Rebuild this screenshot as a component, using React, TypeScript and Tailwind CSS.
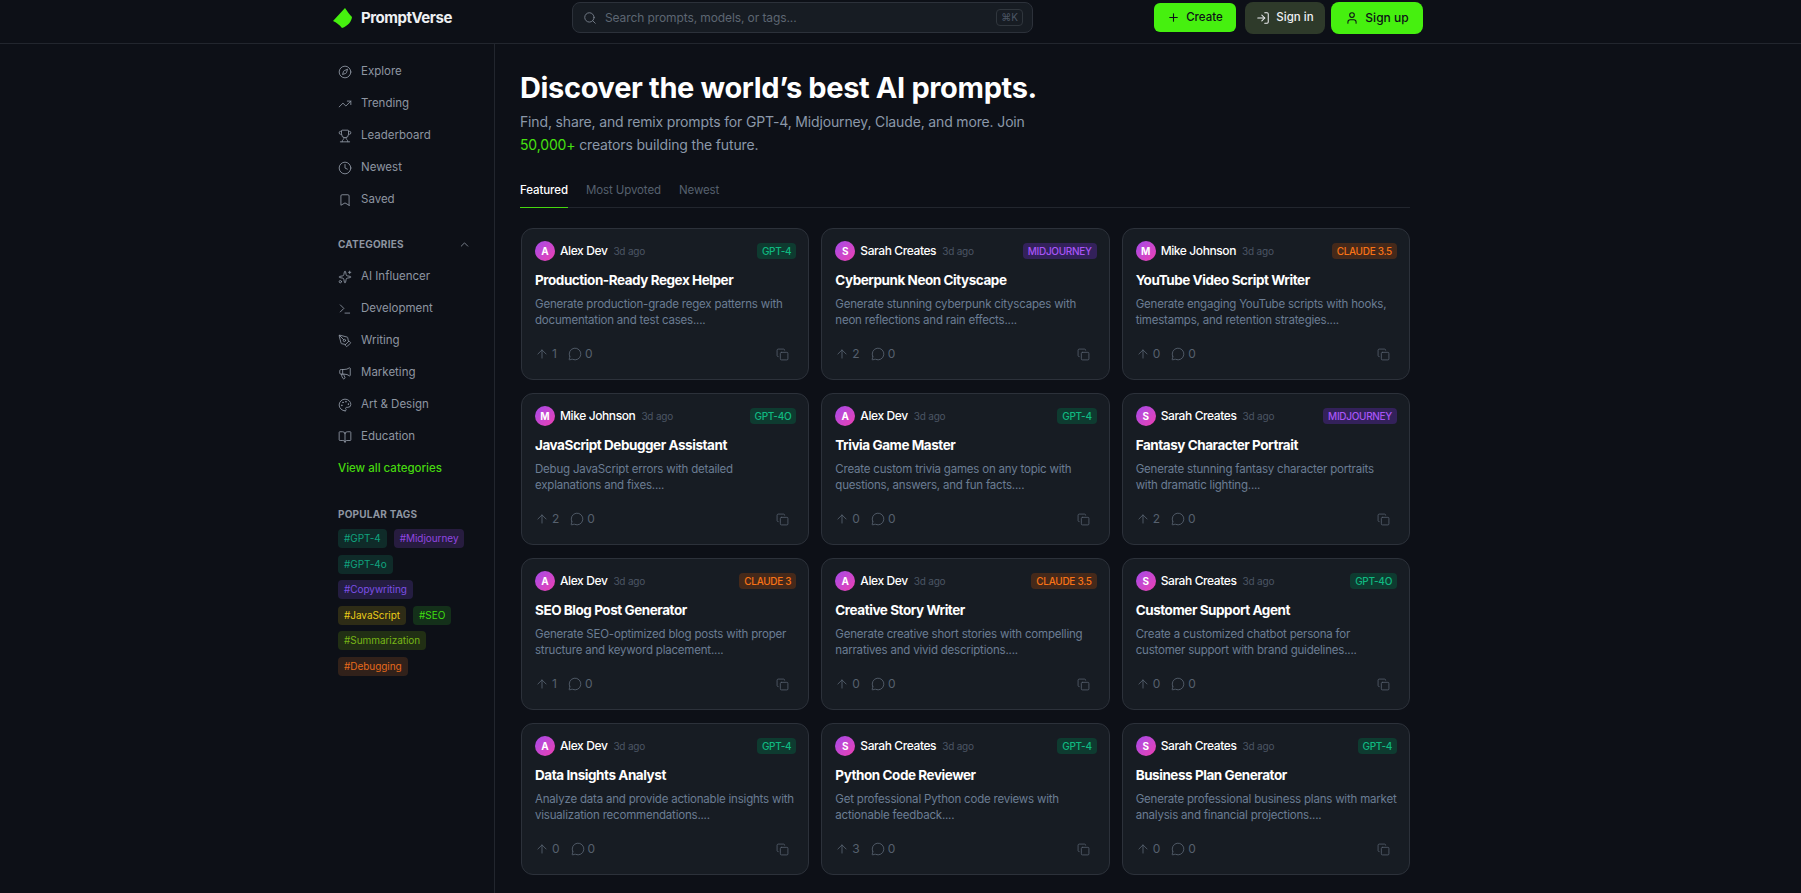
import React from 'react';
import {
  ArrowUp, BookOpen, Bookmark, ChevronUp, Clock, Compass, Copy, LogIn, Megaphone,
  MessageCircle, Palette, PenTool, Plus, Search, Sparkles, Terminal, TrendingUp, Trophy, User,
} from 'lucide-react';

const mainNav = [
  { label: 'Explore', icon: Compass },
  { label: 'Trending', icon: TrendingUp },
  { label: 'Leaderboard', icon: Trophy },
  { label: 'Newest', icon: Clock },
  { label: 'Saved', icon: Bookmark },
];

const categories = [
  { label: 'AI Influencer', icon: Sparkles },
  { label: 'Development', icon: Terminal },
  { label: 'Writing', icon: PenTool },
  { label: 'Marketing', icon: Megaphone },
  { label: 'Art & Design', icon: Palette },
  { label: 'Education', icon: BookOpen },
];

const tagRows = [
  [
    { label: '#GPT-4', cls: 'bg-[#0f2b29] text-[#10a37f]' },
    { label: '#Midjourney', cls: 'bg-[#271c3f] text-[#9146e0]' },
  ],
  [{ label: '#GPT-4o', cls: 'bg-[#0f2b29] text-[#10a37f]' }],
  [{ label: '#Copywriting', cls: 'bg-[#241d41] text-[#7c4fe6]' }],
  [
    { label: '#JavaScript', cls: 'bg-[#2e2c16] text-[#eacb18]' },
    { label: '#SEO', cls: 'bg-[#14301a] text-[#3fdc10]' },
  ],
  [{ label: '#Summarization', cls: 'bg-[#212f14] text-[#77b516]' }],
  [{ label: '#Debugging', cls: 'bg-[#31211a] text-[#e5691c]' }],
];

const badges: Record<string, string> = {
  'GPT-4': 'bg-[#0e3b30] text-[#10b981]',
  'GPT-4O': 'bg-[#0e3b30] text-[#10b981]',
  MIDJOURNEY: 'bg-[#33215a] text-[#a855f7]',
  'CLAUDE 3.5': 'bg-[#45291a] text-[#f97316]',
  'CLAUDE 3': 'bg-[#45291a] text-[#f97316]',
};

const prompts = [
  { author: 'Alex Dev', initial: 'A', model: 'GPT-4', title: 'Production-Ready Regex Helper', desc: 'Generate production-grade regex patterns with documentation and test cases....', up: 1 },
  { author: 'Sarah Creates', initial: 'S', model: 'MIDJOURNEY', title: 'Cyberpunk Neon Cityscape', desc: 'Generate stunning cyberpunk cityscapes with neon reflections and rain effects....', up: 2 },
  { author: 'Mike Johnson', initial: 'M', model: 'CLAUDE 3.5', title: 'YouTube Video Script Writer', desc: 'Generate engaging YouTube scripts with hooks, timestamps, and retention strategies....', up: 0 },
  { author: 'Mike Johnson', initial: 'M', model: 'GPT-4O', title: 'JavaScript Debugger Assistant', desc: 'Debug JavaScript errors with detailed explanations and fixes....', up: 2 },
  { author: 'Alex Dev', initial: 'A', model: 'GPT-4', title: 'Trivia Game Master', desc: 'Create custom trivia games on any topic with questions, answers, and fun facts....', up: 0 },
  { author: 'Sarah Creates', initial: 'S', model: 'MIDJOURNEY', title: 'Fantasy Character Portrait', desc: 'Generate stunning fantasy character portraits with dramatic lighting....', up: 2 },
  { author: 'Alex Dev', initial: 'A', model: 'CLAUDE 3', title: 'SEO Blog Post Generator', desc: 'Generate SEO-optimized blog posts with proper structure and keyword placement....', up: 1 },
  { author: 'Alex Dev', initial: 'A', model: 'CLAUDE 3.5', title: 'Creative Story Writer', desc: 'Generate creative short stories with compelling narratives and vivid descriptions....', up: 0 },
  { author: 'Sarah Creates', initial: 'S', model: 'GPT-4O', title: 'Customer Support Agent', desc: 'Create a customized chatbot persona for customer support with brand guidelines....', up: 0 },
  { author: 'Alex Dev', initial: 'A', model: 'GPT-4', title: 'Data Insights Analyst', desc: 'Analyze data and provide actionable insights with visualization recommendations....', up: 0 },
  { author: 'Sarah Creates', initial: 'S', model: 'GPT-4', title: 'Python Code Reviewer', desc: 'Get professional Python code reviews with actionable feedback....', up: 3 },
  { author: 'Sarah Creates', initial: 'S', model: 'GPT-4', title: 'Business Plan Generator', desc: 'Generate professional business plans with market analysis and financial projections....', up: 0 },
];

function PromptCard({ p }: { p: (typeof prompts)[number] }) {
  return (
    <div className="flex h-[152px] flex-col rounded-xl border border-[#2c313a] bg-[#171c23] pt-[12px] pr-[12px] pl-[13px]">
      <div className="flex h-[20px] items-center">
        <div className="flex h-[20px] w-[20px] items-center justify-center rounded-full bg-gradient-to-br from-[#a445ea] to-[#ee3bb0] text-[10px] font-bold text-white">
          {p.initial}
        </div>
        <span className="ml-[5px] text-[12px] font-medium tracking-[-0.4px] text-white">{p.author}</span>
        <span className="ml-[6px] text-[10px] tracking-[-0.2px] text-[#4b5563]">3d ago</span>
        <span className={`ml-auto flex h-[16px] items-center rounded px-[5px] text-[10px] font-medium tracking-[-0.3px] ${badges[p.model]}`}>
          {p.model}
        </span>
      </div>
      <h3 className="mt-[9px] text-[13.5px] leading-[20px] font-bold tracking-[-0.45px] text-white">{p.title}</h3>
      <p className="mt-[6px] text-[11.5px] leading-[16px] tracking-[-0.2px] text-[#6b7d93]">{p.desc}</p>
      <div className="mt-auto mb-[16px] flex items-center text-[12px] text-[#56606e]">
        <ArrowUp size={14} strokeWidth={1.5} />
        <span className="ml-[3px]">{p.up}</span>
        <MessageCircle size={14} strokeWidth={1.5} className="ml-[11px]" />
        <span className="ml-[3px]">0</span>
        <Copy size={13} strokeWidth={1.5} className="mr-[7px] ml-auto" />
      </div>
    </div>
  );
}

export default function App() {
  return (
    <div className="min-h-[893px] bg-[#0d1017] font-['Inter',sans-serif] text-white">
      {/* Header */}
      <header className="h-[44px] border-b border-[#22262e]">
        <div className="ml-[320px] flex h-[43px] w-[1104px] items-start">
          <div className="mt-[8px] ml-[13px] flex w-[239px] items-center">
            <svg viewBox="0 0 20 20" className="h-[20px] w-[20px]">
              <path d="M0 13 L12 0 C14 3 16.5 6.5 19 9 C18.5 13.5 15 18 9 20 C6.5 17 3.5 14.5 0 13 Z" fill="#46f00f" />
            </svg>
            <span className="ml-[8px] text-[15px] leading-[18px] font-bold tracking-[-0.45px] text-[#eef0f3]">PromptVerse</span>
          </div>
          <div className="mt-[2px] flex h-[31px] w-[461px] items-center rounded-lg border border-[#2c313a] bg-[#171c23] pr-[9px] pl-[10px]">
            <Search size={14} strokeWidth={1.5} className="text-[#7b8490]" />
            <span className="ml-[8px] text-[12px] tracking-[-0.1px] text-[#5d6672]">Search prompts, models, or tags...</span>
            <span className="ml-auto flex h-[17px] w-[27px] items-center justify-center rounded border border-[#30363d] text-[10px] text-[#4b5563]">⌘K</span>
          </div>
          <div className="mt-[3px] ml-[121px] flex h-[29px] w-[82px] items-center justify-center gap-[6px] rounded-md bg-[#46f00f] text-[11.5px] font-medium text-[#0d1017]">
            <Plus size={13} strokeWidth={2} />
            Create
          </div>
          <div className="mt-[2px] ml-[9px] flex h-[32px] w-[80px] items-center justify-center gap-[6px] rounded-lg bg-[#2e3a2a] text-[11.5px] font-medium text-[#eef0f3]">
            <LogIn size={14} strokeWidth={1.75} />
            Sign in
          </div>
          <div className="mt-[2px] ml-[6px] flex h-[32px] w-[92px] items-center justify-center gap-[6px] rounded-lg bg-[#46f00f] text-[12px] font-medium text-[#0d1017]">
            <User size={14} strokeWidth={1.75} />
            Sign up
          </div>
        </div>
      </header>

      <div className="ml-[320px] flex min-h-[849px] w-[1104px]">
        {/* Sidebar */}
        <aside className="w-[175px] shrink-0 border-r border-[#22262e] pt-[12px] pl-[18px]">
          <nav>
            {mainNav.map(item => (
              <div key={item.label} className="flex h-[32px] items-center text-[11.5px] text-[#8d95a1]">
                <item.icon size={14} strokeWidth={1.5} />
                <span className="ml-[9px]">{item.label}</span>
              </div>
            ))}
          </nav>
          <div className="mt-[20px] flex h-[16px] items-center justify-between pr-[23px] text-[10px] font-bold tracking-[0.2px] text-[#8d95a1]">
            CATEGORIES
            <ChevronUp size={13} strokeWidth={1.5} />
          </div>
          <div className="mt-[9px]">
            {categories.map(item => (
              <div key={item.label} className="flex h-[32px] items-center text-[11.5px] text-[#8d95a1]">
                <item.icon size={14} strokeWidth={1.5} />
                <span className="ml-[9px]">{item.label}</span>
              </div>
            ))}
            <div className="flex h-[32px] items-center text-[11.5px] font-medium text-[#46d80f]">View all categories</div>
          </div>
          <div className="mt-[22px] text-[10px] leading-[14px] font-bold tracking-[0.2px] text-[#8d95a1]">POPULAR TAGS</div>
          <div className="mt-[8px] flex flex-col gap-[6.6px]">
            {tagRows.map((row, idx) => (
              <div key={idx} className="flex gap-[7px]">
                {row.map(tag => (
                  <span key={tag.label} className={`flex h-[19px] items-center rounded px-[6px] text-[10px] tracking-[-0.05px] ${tag.cls}`}>
                    {tag.label}
                  </span>
                ))}
              </div>
            ))}
          </div>
        </aside>

        {/* Main */}
        <main className="min-w-0 flex-1 pt-[27px] pr-[14px] pl-[25px]">
          <h1 className="text-[29px] leading-[34px] font-bold tracking-[-0.35px] text-white">Discover the world’s best AI prompts.</h1>
          <p className="mt-[5px] w-[520px] text-[14px] leading-[23px] tracking-[-0.15px] text-[#8b98a9]">
            Find, share, and remix prompts for GPT-4, Midjourney, Claude, and more. Join{' '}
            <br />
            <span className="text-[#46e010]">50,000+</span> creators building the future.
          </p>
          <div className="mt-[18px] flex h-[34px] gap-[18px] border-b border-[#22262e] text-[11.5px] tracking-[-0.1px]">
            <span className="h-[34px] border-b border-[#46d80f] pt-[8px] font-medium text-white">Featured</span>
            <span className="pt-[8px] text-[#56606e]">Most Upvoted</span>
            <span className="pt-[8px] text-[#56606e]">Newest</span>
          </div>
          <div className="mt-[20px] ml-[1px] grid grid-cols-3 gap-x-[12px] gap-y-[13px] pb-[18px]">
            {prompts.map(p => (
              <PromptCard key={p.title} p={p} />
            ))}
          </div>
        </main>
      </div>
    </div>
  );
}
